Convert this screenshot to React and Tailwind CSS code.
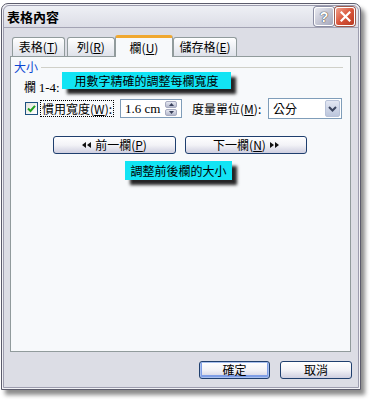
import React from "react";

const Key = ({ k }) => (
    <span>(<span className="underline">{k}</span>)</span>
);

const Tab = ({ label, k, width, active }) => {
    if (active) {
        return (
            <div className={`${width} h-[22px] -mb-px relative z-10 flex items-center justify-center bg-[#f7f9fb] border-x border-[#919b9c] border-t-[3px] border-t-[#f0a830] rounded-t-[3px] text-[12px] leading-[14px]`}>
                {label}<Key k={k} />
            </div>
        );
    }
    return (
        <div className={`${width} h-[19px] flex items-center justify-center bg-gradient-to-b from-white to-[#dfe2ea] border-x border-t border-[#919b9c] rounded-t-[3px] text-[12px] leading-[14px]`}>
            {label}<Key k={k} />
        </div>
    );
};

const XpButton = ({ children, className = "" }) => (
    <div className={`flex items-center justify-center border border-[#1f3f6e] rounded-[3px] bg-gradient-to-b from-white via-[#f3f3f7] to-[#cfcfe0] text-[12px] leading-[14px] ${className}`}>
        {children}
    </div>
);

const Tip = ({ children, className }) => (
    <div className={`absolute bg-[#12e4f4] flex items-center justify-center whitespace-nowrap text-[12px] leading-[14px] shadow-[5px_5px_3px_rgba(0,0,0,0.85)] ${className}`}>
        {children}
    </div>
);

const App = () => {
    return (
        <div className="w-[370px] h-[400px] bg-white pt-[3px] pl-[1px] font-['Noto_Sans_CJK_TC','Liberation_Sans',sans-serif] text-black">
            <div className="w-[360px] h-[387px] border border-[#5c5c6c] rounded-t-[7px] p-px bg-[#f2f2f6] shadow-[4px_5px_4px_rgba(0,0,0,0.45)]">
                <div className="h-full flex flex-col border border-[#9d9daf] rounded-t-[6px] bg-[#dcdde5]">
                    {/* title bar */}
                    <div className="h-[22px] flex items-center justify-between pl-[3px] pr-[3px] bg-gradient-to-b from-[#eef0f5] to-[#dcdde6] border-b border-[#a3a3b3] rounded-t-[6px]">
                        <span className="text-[13px] leading-[16px] font-bold">表格內容</span>
                        <div className="flex gap-px">
                            <div className="w-[20px] h-[19px] rounded-[3px] border border-white bg-gradient-to-br from-[#e8e9f0] to-[#a4a6ba] flex items-center justify-center shadow-[0_0_0_1px_#8c8ea4]">
                                <span className="text-white font-bold text-[14px] leading-[14px] font-['Liberation_Sans',sans-serif] [text-shadow:0_0_1px_#333,0_0_1px_#333]">?</span>
                            </div>
                            <div className="w-[20px] h-[19px] rounded-[3px] border border-white bg-gradient-to-br from-[#f0a08c] via-[#d9543a] to-[#b83a22] flex items-center justify-center shadow-[0_0_0_1px_#9c5a4e]">
                                <svg width="11" height="11" viewBox="0 0 11 11">
                                    <path d="M1.5 1.5 L9.5 9.5 M9.5 1.5 L1.5 9.5" stroke="white" strokeWidth="2.2" strokeLinecap="square" />
                                </svg>
                            </div>
                        </div>
                    </div>

                    {/* body */}
                    <div className="flex-1 flex flex-col pl-[6px] pr-[7px] pt-[7px]">
                        <div className="h-[21px] flex items-end pl-[2px] gap-[2px]">
                            <Tab label="表格" k="T" width="w-[53px]" />
                            <Tab label="列" k="R" width="w-[48px]" />
                            <div className="-ml-[2px] -mr-[2px] flex items-end relative z-10">
                                <Tab label="欄" k="U" width="w-[58px]" active />
                            </div>
                            <Tab label="儲存格" k="E" width="w-[64px]" />
                        </div>

                        <div className="relative h-[296px] bg-[#f7f9fb] border border-[#919b9c] pl-[3px] pt-[3px]">
                            <div className="flex items-center">
                                <span className="text-[12px] leading-[14px] text-[#0b46d2]">大小</span>
                                <div className="flex-1 h-px bg-[#d0d0c8] ml-[3px] mr-[7px] mt-px" />
                            </div>
                            <div className="mt-[6px] ml-[10px] text-[12px] leading-[14px]">
                                欄 <span className="font-['Liberation_Serif',serif] text-[13px]">1-4:</span>
                            </div>

                            <div className="mt-[3px] flex items-center h-[21px] text-[12px] leading-[14px]">
                                <div className="ml-[11px] w-[13px] h-[13px] border border-[#1c5180] bg-gradient-to-br from-[#e4e4de] to-white flex items-center justify-center">
                                    <svg width="9" height="9" viewBox="0 0 9 9">
                                        <path d="M1 4.5 L3.5 7 L8 1.8" fill="none" stroke="#21a121" strokeWidth="2" />
                                    </svg>
                                </div>
                                <div className="ml-[2px] h-[17px] px-[1px] border border-dotted border-black flex items-center">
                                    慣用寬度<Key k="W" />:
                                </div>
                                <div className="ml-[6px] w-[62px] h-[19px] border border-[#7f9db9] bg-white flex items-center justify-between pl-[4px] pr-[4px]">
                                    <span className="font-['Liberation_Serif',serif] text-[13px]">1.6 cm</span>
                                    <div className="flex flex-col gap-px">
                                        <div className="w-[12px] h-[7px] rounded-[2px] bg-gradient-to-b from-[#e6e8f2] to-[#b4b9cc] border border-[#a7abc0] flex items-center justify-center">
                                            <svg width="5" height="3" viewBox="0 0 5 3"><path d="M0 3 L2.5 0 L5 3Z" fill="#39405a" /></svg>
                                        </div>
                                        <div className="w-[12px] h-[7px] rounded-[2px] bg-gradient-to-b from-[#e6e8f2] to-[#b4b9cc] border border-[#a7abc0] flex items-center justify-center">
                                            <svg width="5" height="3" viewBox="0 0 5 3"><path d="M0 0 L2.5 3 L5 0Z" fill="#39405a" /></svg>
                                        </div>
                                    </div>
                                </div>
                                <div className="ml-[10px] w-[70px]">
                                    度量單位<Key k="M" />:
                                </div>
                                <div className="ml-[6px] w-[74px] h-[21px] border border-[#7f9db9] bg-white flex items-center justify-between pl-[4px] pr-px">
                                    <span>公分</span>
                                    <div className="w-[15px] h-[17px] rounded-[2px] bg-gradient-to-b from-[#e3e7f3] to-[#bcc6dc] border border-[#b9c3d9] flex items-center justify-center">
                                        <svg width="9" height="6" viewBox="0 0 9 6">
                                            <path d="M1 1 L4.5 4.5 L8 1" fill="none" stroke="#3c4660" strokeWidth="2" />
                                        </svg>
                                    </div>
                                </div>
                            </div>

                            <div className="mt-[17px] flex">
                                <XpButton className="ml-[39px] w-[123px] h-[18px] gap-[4px]">
                                    <svg width="9" height="6" viewBox="0 0 9 6"><path d="M0 3 L4 0 L4 6Z M5 3 L9 0 L9 6Z" fill="#111" /></svg>
                                    <span>前一欄<Key k="P" /></span>
                                </XpButton>
                                <XpButton className="ml-[9px] w-[122px] h-[18px] gap-[4px]">
                                    <span>下一欄<Key k="N" /></span>
                                    <svg width="9" height="6" viewBox="0 0 9 6"><path d="M0 0 L4 3 L0 6Z M5 0 L9 3 L5 6Z" fill="#111" /></svg>
                                </XpButton>
                            </div>

                            <Tip className="left-[51px] top-[15px] w-[169px] h-[17px]">用數字精確的調整每欄寬度</Tip>
                            <Tip className="left-[114px] top-[104px] w-[107px] h-[19px]">調整前後欄的大小</Tip>
                        </div>

                        <div className="mt-[9px] flex justify-end gap-[10px] -mr-px">
                            <XpButton className="w-[71px] h-[18px] shadow-[inset_0_0_0_1px_#a9c0ee,inset_0_-1px_0_2px_#7f9ee6]">確定</XpButton>
                            <XpButton className="w-[72px] h-[18px]">取消</XpButton>
                        </div>
                    </div>
                </div>
            </div>
        </div>
    );
};

export default App;
